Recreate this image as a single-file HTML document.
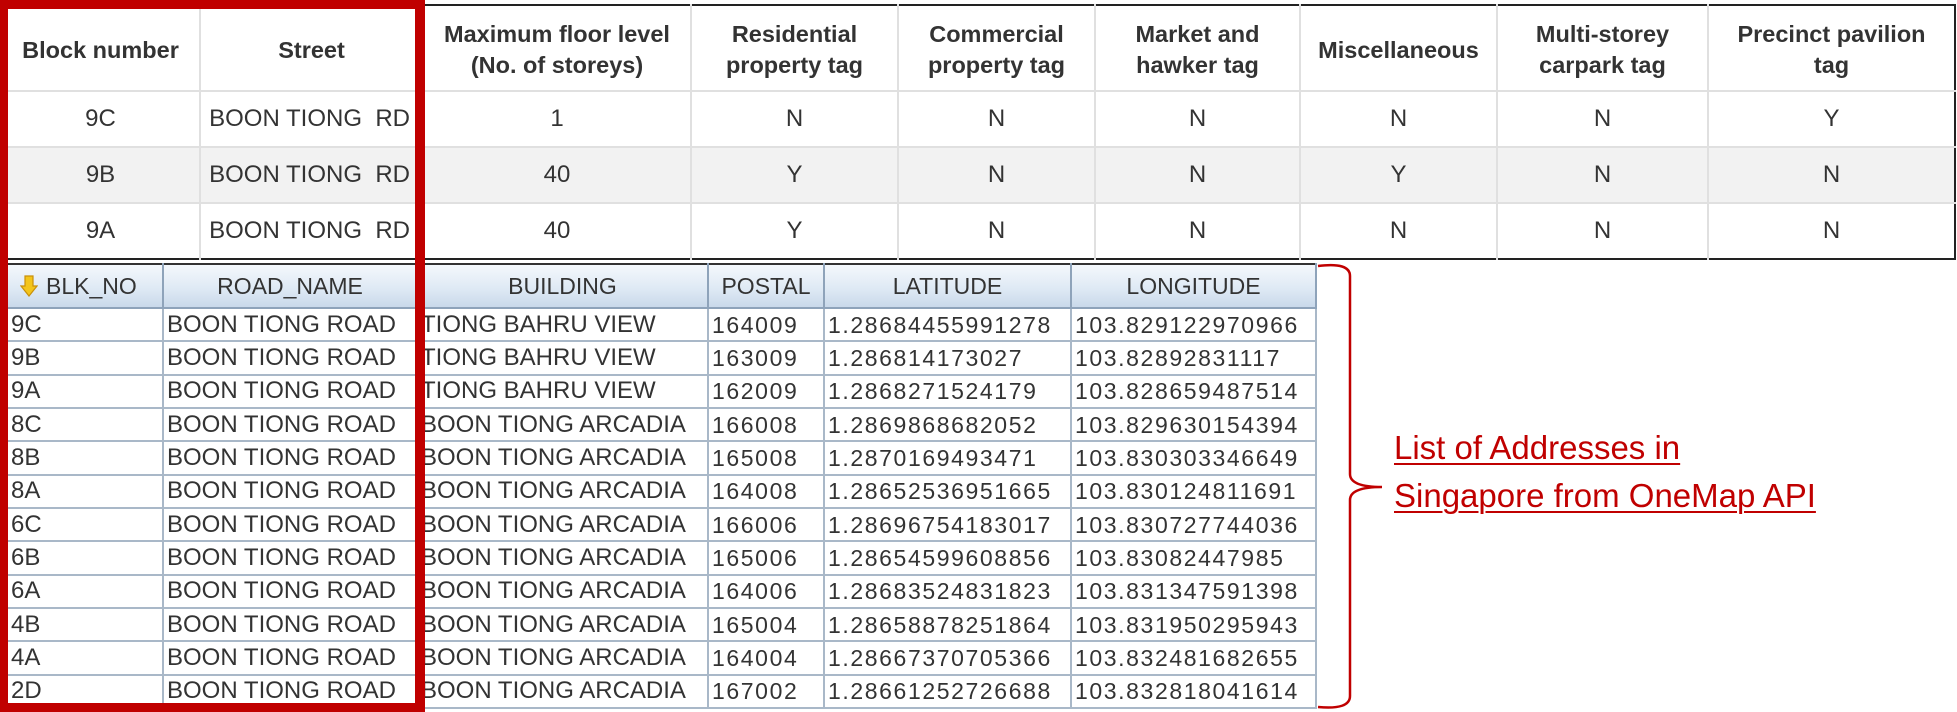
<!DOCTYPE html>
<html><head><meta charset="utf-8"><style>
*{margin:0;padding:0;box-sizing:border-box}
body{width:1957px;height:712px;background:#fff;position:relative;overflow:hidden;font-family:"Liberation Sans",Arial,sans-serif;color:#333}
.t{position:absolute;border-collapse:collapse;table-layout:fixed}
#top{left:0;top:4px;width:1954px;border:2px solid #222;border-left:none}
#top td{border:2px solid #e0e0e0;text-align:center;font-size:24px;vertical-align:middle}
#top tr:first-child td{font-weight:bold;font-size:23.5px;line-height:31px;border-top:none;padding-top:4px}
#top tr.g td{background:#f2f2f2}
#top td:last-child{border-right:none}
#top tr:last-child td{border-bottom:none}
#bot{left:0;top:263px;width:1315px;border-top:2px solid #333}
#bot th{height:44px;font-weight:normal;font-size:23px;color:#333;background:linear-gradient(#f4f8fc,#dde8f4 60%,#c9d9ea);border:2px solid #8ea3ba;border-top:none}
#bot td{height:33.33px;font-size:24px;border:2px solid #a9b8c8;padding-left:3px;white-space:nowrap;overflow:hidden;line-height:28px}
#bot td.n{letter-spacing:1.6px;font-size:23px}
#bot td.f{padding-left:9px}
.red{position:absolute;background:#c00000}
.lbl{position:absolute;left:1394px;top:424px;font-size:33px;line-height:48px;color:#c00000;text-decoration:underline;text-decoration-thickness:2px;text-underline-offset:4px;font-family:"Liberation Sans",Carlito,sans-serif}
</style></head><body>
<table class="t" id="top">
<colgroup><col style="width:199px"><col style="width:223px"><col style="width:268px"><col style="width:207px"><col style="width:197px"><col style="width:205px"><col style="width:197px"><col style="width:211px"><col style="width:247px"></colgroup>
<tr style="height:86px"><td>Block number</td><td>Street</td><td>Maximum floor level<br>(No. of storeys)</td><td>Residential<br>property tag</td><td>Commercial<br>property tag</td><td>Market and<br>hawker tag</td><td>Miscellaneous</td><td>Multi-storey<br>carpark tag</td><td>Precinct pavilion<br>tag</td></tr>
<tr style="height:56px"><td>9C</td><td style="text-align:right;padding-right:12px">BOON TIONG&nbsp; RD</td><td>1</td><td>N</td><td>N</td><td>N</td><td>N</td><td>N</td><td>Y</td></tr>
<tr class="g" style="height:56px"><td>9B</td><td style="text-align:right;padding-right:12px">BOON TIONG&nbsp; RD</td><td>40</td><td>Y</td><td>N</td><td>N</td><td>Y</td><td>N</td><td>N</td></tr>
<tr style="height:56px"><td>9A</td><td style="text-align:right;padding-right:12px">BOON TIONG&nbsp; RD</td><td>40</td><td>Y</td><td>N</td><td>N</td><td>N</td><td>N</td><td>N</td></tr>
</table>
<table class="t" id="bot">
<colgroup><col style="width:162px"><col style="width:254px"><col style="width:291px"><col style="width:116px"><col style="width:247px"><col style="width:245px"></colgroup>
<tr><th style="text-align:left;padding-left:18px"><svg width="18" height="22" viewBox="0 0 18 22" style="vertical-align:-3px;margin-right:8px"><path d="M5 1h8v10h4L9 21 1 11h4z" fill="#f3c51b" stroke="#c9900a" stroke-width="1.2"/></svg>BLK_NO</th><th>ROAD_NAME</th><th>BUILDING</th><th>POSTAL</th><th>LATITUDE</th><th>LONGITUDE</th></tr>
<tr><td class="f">9C</td><td>BOON TIONG ROAD</td><td>TIONG BAHRU VIEW</td><td class="n">164009</td><td class="n">1.28684455991278</td><td class="n">103.829122970966</td></tr>
<tr><td class="f">9B</td><td>BOON TIONG ROAD</td><td>TIONG BAHRU VIEW</td><td class="n">163009</td><td class="n">1.286814173027</td><td class="n">103.82892831117</td></tr>
<tr><td class="f">9A</td><td>BOON TIONG ROAD</td><td>TIONG BAHRU VIEW</td><td class="n">162009</td><td class="n">1.2868271524179</td><td class="n">103.828659487514</td></tr>
<tr><td class="f">8C</td><td>BOON TIONG ROAD</td><td>BOON TIONG ARCADIA</td><td class="n">166008</td><td class="n">1.2869868682052</td><td class="n">103.829630154394</td></tr>
<tr><td class="f">8B</td><td>BOON TIONG ROAD</td><td>BOON TIONG ARCADIA</td><td class="n">165008</td><td class="n">1.2870169493471</td><td class="n">103.830303346649</td></tr>
<tr><td class="f">8A</td><td>BOON TIONG ROAD</td><td>BOON TIONG ARCADIA</td><td class="n">164008</td><td class="n">1.28652536951665</td><td class="n">103.830124811691</td></tr>
<tr><td class="f">6C</td><td>BOON TIONG ROAD</td><td>BOON TIONG ARCADIA</td><td class="n">166006</td><td class="n">1.28696754183017</td><td class="n">103.830727744036</td></tr>
<tr><td class="f">6B</td><td>BOON TIONG ROAD</td><td>BOON TIONG ARCADIA</td><td class="n">165006</td><td class="n">1.28654599608856</td><td class="n">103.83082447985</td></tr>
<tr><td class="f">6A</td><td>BOON TIONG ROAD</td><td>BOON TIONG ARCADIA</td><td class="n">164006</td><td class="n">1.28683524831823</td><td class="n">103.831347591398</td></tr>
<tr><td class="f">4B</td><td>BOON TIONG ROAD</td><td>BOON TIONG ARCADIA</td><td class="n">165004</td><td class="n">1.28658878251864</td><td class="n">103.831950295943</td></tr>
<tr><td class="f">4A</td><td>BOON TIONG ROAD</td><td>BOON TIONG ARCADIA</td><td class="n">164004</td><td class="n">1.28667370705366</td><td class="n">103.832481682655</td></tr>
<tr><td class="f">2D</td><td>BOON TIONG ROAD</td><td>BOON TIONG ARCADIA</td><td class="n">167002</td><td class="n">1.28661252726688</td><td class="n">103.832818041614</td></tr>
</table>
<div class="red" style="left:0;top:0;width:425px;height:9px"></div>
<div class="red" style="left:0;top:0;width:8px;height:712px"></div>
<div class="red" style="left:415px;top:0;width:10px;height:712px"></div>
<div class="red" style="left:0;top:703px;width:425px;height:9px"></div>
<svg style="position:absolute;left:0;top:0" width="1957" height="712"><path d="M1318 266 Q1350 262 1350 276 L1350 474 Q1350 487 1382 487 Q1350 487 1350 500 L1350 696 Q1350 710 1318 707" fill="none" stroke="#c00000" stroke-width="2.5"/></svg>
<div class="lbl">List of Addresses in<br>Singapore from OneMap API</div>
</body></html>
